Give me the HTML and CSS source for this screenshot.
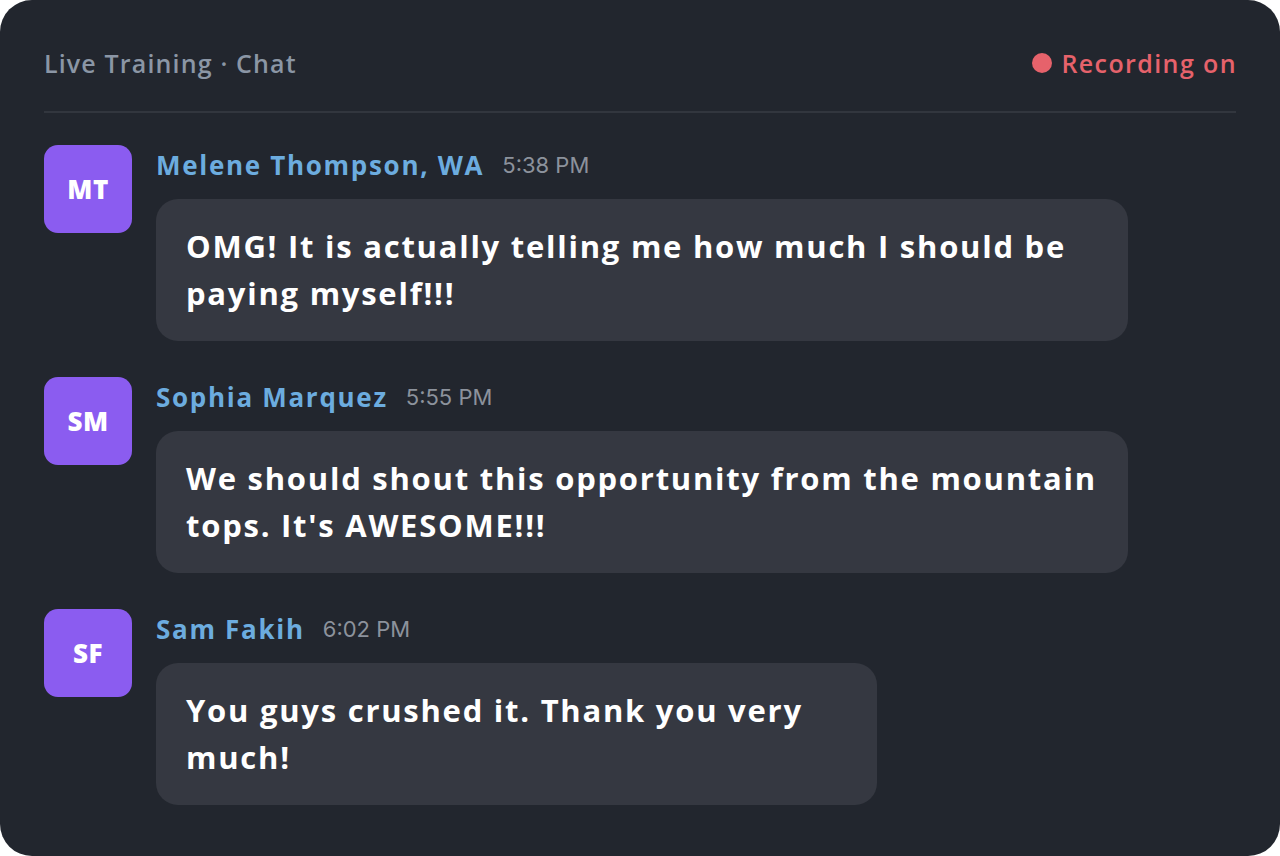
FILE: index.html
```html
<!DOCTYPE html>
<html lang="en">
<head>
<meta charset="utf-8">
<title>Live Training · Chat</title>
<link rel="stylesheet" href="styles.css">
</head>
<body>
<div class="card">
  <header class="top">
    <div class="title">Live Training · Chat</div>
    <div class="rec"><span class="dot"></span>Recording on</div>
  </header>
  <div class="messages">
    <div class="msg">
      <div class="avatar">MT</div>
      <div class="body">
        <div class="meta"><span class="name">Melene Thompson, WA</span><span class="time">5:38 PM</span></div>
        <div class="bubble">OMG! It is actually telling me how much I should be paying myself!!!</div>
      </div>
    </div>
    <div class="msg">
      <div class="avatar">SM</div>
      <div class="body">
        <div class="meta"><span class="name">Sophia Marquez</span><span class="time">5:55 PM</span></div>
        <div class="bubble">We should shout this opportunity from the mountain tops. It's AWESOME!!!</div>
      </div>
    </div>
    <div class="msg">
      <div class="avatar">SF</div>
      <div class="body">
        <div class="meta"><span class="name">Sam Fakih</span><span class="time">6:02 PM</span></div>
        <div class="bubble bubble-short">You guys crushed it. Thank you very much!</div>
      </div>
    </div>
  </div>
</div>
</body>
</html>
```
FILE: styles.css
```css
html, body {
  margin: 0;
  padding: 0;
  background: #ffffff;
}
body {
  width: 1280px;
  height: 856px;
  overflow: hidden;
  font-family: "Open Sans", "Noto Sans", sans-serif;
}
.card {
  box-sizing: border-box;
  width: 1280px;
  height: 856px;
  background: #22262e;
  border-radius: 32px;
  padding: 0 44px;
}
.top {
  display: flex;
  justify-content: space-between;
  align-items: center;
  height: 113px;
  padding-top: 14px;
  box-sizing: border-box;
  border-bottom: 2px solid #32363e;
}
.title {
  color: #8b96a5;
  font-size: 25px;
  font-weight: 600;
  letter-spacing: 1.15px;
}
.rec {
  display: flex;
  align-items: center;
  gap: 9px;
  color: #e6626b;
  font-size: 25px;
  font-weight: 600;
  letter-spacing: 1.4px;
  margin-right: -1px;
}
.dot {
  width: 20px;
  height: 20px;
  border-radius: 50%;
  background: #e6626b;
}
.messages {
  display: flex;
  flex-direction: column;
  gap: 36px;
  padding-top: 32px;
}
.msg {
  display: flex;
  gap: 24px;
  align-items: flex-start;
}
.avatar {
  flex: none;
  width: 88px;
  height: 88px;
  border-radius: 14px;
  background: #8b5cf0;
  color: #ffffff;
  font-weight: 800;
  font-size: 26px;
  display: flex;
  align-items: center;
  justify-content: center;
  letter-spacing: 0.5px;
}
.body {
  display: flex;
  flex-direction: column;
}
.meta {
  display: flex;
  align-items: center;
  gap: 18px;
  height: 40px;
  margin-bottom: 14px;
}
.name {
  color: #6cacdf;
  font-weight: 700;
  font-size: 26px;
  letter-spacing: 1.7px;
}
.time {
  color: #8c929c;
  font-family: Inter, sans-serif;
  font-size: 22px;
  font-weight: 400;
}
.bubble {
  box-sizing: border-box;
  width: 972px;
  background: #353841;
  border-radius: 22px;
  padding: 24px 22px 24px 30px;
  color: #ffffff;
  font-size: 31px;
  font-weight: 700;
  line-height: 47px;
  letter-spacing: 1.75px;
}
.bubble-short {
  width: 721px;
}
```
